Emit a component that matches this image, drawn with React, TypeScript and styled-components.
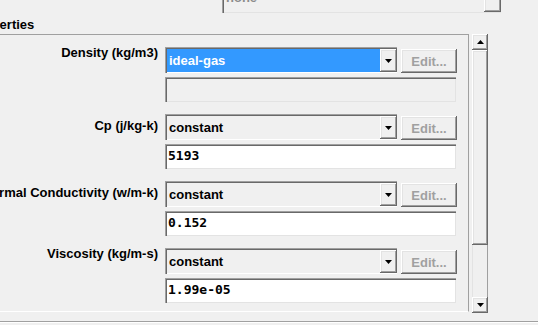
import React from 'react';
import styled, { createGlobalStyle, css } from 'styled-components';

const GlobalStyle = createGlobalStyle`
  html, body {
    margin: 0;
    padding: 0;
    background: #f0f0f0;
    overflow: hidden;
  }
  body {
    font-family: 'Liberation Sans', Arial, sans-serif;
  }
`;

const raised = css`
  background: #f0f0f0;
  box-shadow: inset -1px -1px #696969, inset 1px 1px #ffffff, inset -2px -2px #a0a0a0,
    inset 2px 2px #e3e3e3;
`;

const properties = [
  { label: 'Density (kg/m3)', method: 'ideal-gas', value: '', selected: true, labelShift: -1 },
  { label: 'Cp (j/kg-k)', method: 'constant', value: '5193', selected: false, labelShift: 5 },
  { label: 'Thermal Conductivity (w/m-k)', method: 'constant', value: '0.152', selected: false, labelShift: 5 },
  { label: 'Viscosity (kg/m-s)', method: 'constant', value: '1.99e-05', selected: false, labelShift: -1 },
];

const Arrow = ({ up = false, color = '#000' }: { up?: boolean; color?: string }) => (
  <svg width='7' height='4' viewBox='0 0 7 4'>
    <polygon points={up ? '0,4 7,4 3.5,0' : '0,0 7,0 3.5,4'} fill={color} />
  </svg>
);

const App = () => {
  return (
    <Page>
      <GlobalStyle />
      <TopStrip>
        <NoneCombo>
          <NoneText>none</NoneText>
          <DropButton>
            <Arrow color='#a0a0a0' />
          </DropButton>
        </NoneCombo>
      </TopStrip>
      <Heading>
        <HeadingText>Properties</HeadingText>
      </Heading>
      <PanelRow>
        <Content>
          {properties.map((p) => (
            <PropBlock key={p.label}>
              <Label $shift={p.labelShift}>{p.label}</Label>
              <ComboLine>
                <Combo>
                  <ComboValue $selected={p.selected}>{p.method}</ComboValue>
                  <DropButton>
                    <Arrow />
                  </DropButton>
                </Combo>
                <EditButton>Edit...</EditButton>
              </ComboLine>
              <TextBox $disabled={p.value === ''}>{p.value}</TextBox>
            </PropBlock>
          ))}
        </Content>
        <ScrollBar>
          <ScrollButton>
            <Arrow up />
          </ScrollButton>
          <Thumb />
          <Track />
          <ScrollButton>
            <Arrow />
          </ScrollButton>
        </ScrollBar>
      </PanelRow>
      <Footer />
    </Page>
  );
};

const Page = styled.div`
  width: 538px;
  height: 325px;
  overflow: hidden;
  display: flex;
  flex-direction: column;
`;

const TopStrip = styled.div`
  height: 13px;
  flex-shrink: 0;
  display: flex;
  align-items: flex-end;
  padding-left: 222px;
  overflow: hidden;
`;

const NoneCombo = styled.div`
  width: 279px;
  height: 32px;
  flex-shrink: 0;
  box-sizing: border-box;
  display: flex;
  padding: 2px 0 1px 2px;
  box-shadow: inset 1px 1px #a0a0a0, inset 2px 2px #696969, inset 0 -1px #e3e3e3;
`;

const NoneText = styled.div`
  flex: 1;
  display: flex;
  align-items: center;
  padding-left: 2px;
  font-size: 13px;
  font-weight: bold;
  color: #8c8c8c;
`;

const Heading = styled.div`
  height: 21px;
  flex-shrink: 0;
  box-sizing: border-box;
  padding-top: 2px;
`;

const HeadingText = styled.div`
  margin-left: -30px;
  font-size: 13px;
  font-weight: bold;
  line-height: 19px;
  white-space: nowrap;
`;

const PanelRow = styled.div`
  display: flex;
  align-items: flex-start;
  height: 279px;
  flex-shrink: 0;
`;

const Content = styled.div`
  width: 469px;
  height: 278px;
  box-sizing: border-box;
  border-top: 1px solid #a0a0a0;
  border-right: 1px solid #a0a0a0;
  border-bottom: 1px solid #ffffff;
  padding-top: 12px;
  overflow: hidden;
`;

const PropBlock = styled.div`
  display: grid;
  grid-template-columns: 158px 292px;
  column-gap: 7px;
  row-gap: 4px;
  margin-bottom: 12px;
`;

const Label = styled.div<{ $shift: number }>`
  grid-row: 1;
  grid-column: 1;
  display: flex;
  justify-content: flex-end;
  margin-top: ${({ $shift }) => $shift}px;
  font-size: 13px;
  font-weight: bold;
  line-height: 13px;
  white-space: nowrap;
  color: #000;
`;

const ComboLine = styled.div`
  grid-row: 1;
  grid-column: 2;
  display: flex;
  gap: 4px;
`;

const Combo = styled.div`
  width: 232px;
  height: 26px;
  box-sizing: border-box;
  display: flex;
  padding: 2px 0 1px 2px;
  background: #f0f0f0;
  box-shadow: inset 1px 1px #a0a0a0, inset 2px 2px #696969, inset 0 -1px #ffffff;
`;

const ComboValue = styled.div<{ $selected: boolean }>`
  flex: 1;
  display: flex;
  align-items: center;
  padding-left: 2px;
  font-size: 13px;
  font-weight: bold;
  background: ${({ $selected }) => ($selected ? '#3399ff' : 'transparent')};
  color: ${({ $selected }) => ($selected ? '#ffffff' : '#000000')};
`;

const DropButton = styled.div`
  width: 17px;
  flex-shrink: 0;
  display: flex;
  align-items: center;
  justify-content: center;
  ${raised}
`;

const EditButton = styled.div`
  width: 56px;
  height: 24px;
  margin-top: 2px;
  display: flex;
  align-items: center;
  justify-content: center;
  font-size: 13px;
  font-weight: bold;
  color: #a0a0a0;
  ${raised}
`;

const TextBox = styled.div<{ $disabled: boolean }>`
  grid-row: 2;
  grid-column: 2;
  width: 291px;
  height: 25px;
  box-sizing: border-box;
  display: flex;
  align-items: center;
  padding: 0 0 2px 3px;
  font-family: 'DejaVu Sans Mono', 'Liberation Mono', monospace;
  font-size: 13px;
  font-weight: bold;
  color: #000;
  background: ${({ $disabled }) => ($disabled ? '#f0f0f0' : '#ffffff')};
  box-shadow: inset 1px 1px #a0a0a0, inset 2px 2px #696969, inset -1px -1px #e3e3e3;
`;

const ScrollBar = styled.div`
  width: 16px;
  height: 279px;
  margin-left: 3px;
  display: flex;
  flex-direction: column;
  background: #f0f0f0;
  box-shadow: inset 1px 0 #e3e3e3, inset -1px 0 #a0a0a0;
`;

const ScrollButton = styled.div`
  height: 16px;
  display: flex;
  align-items: center;
  justify-content: center;
  ${raised}
`;

const Thumb = styled.div`
  height: 195px;
  ${raised}
`;

const Track = styled.div`
  flex: 1;
`;

const Footer = styled.div`
  margin-top: 8px;
  border-top: 1px solid #a0a0a0;
  box-shadow: inset 0 1px #ffffff;
  flex: 1;
`;

export default App;
